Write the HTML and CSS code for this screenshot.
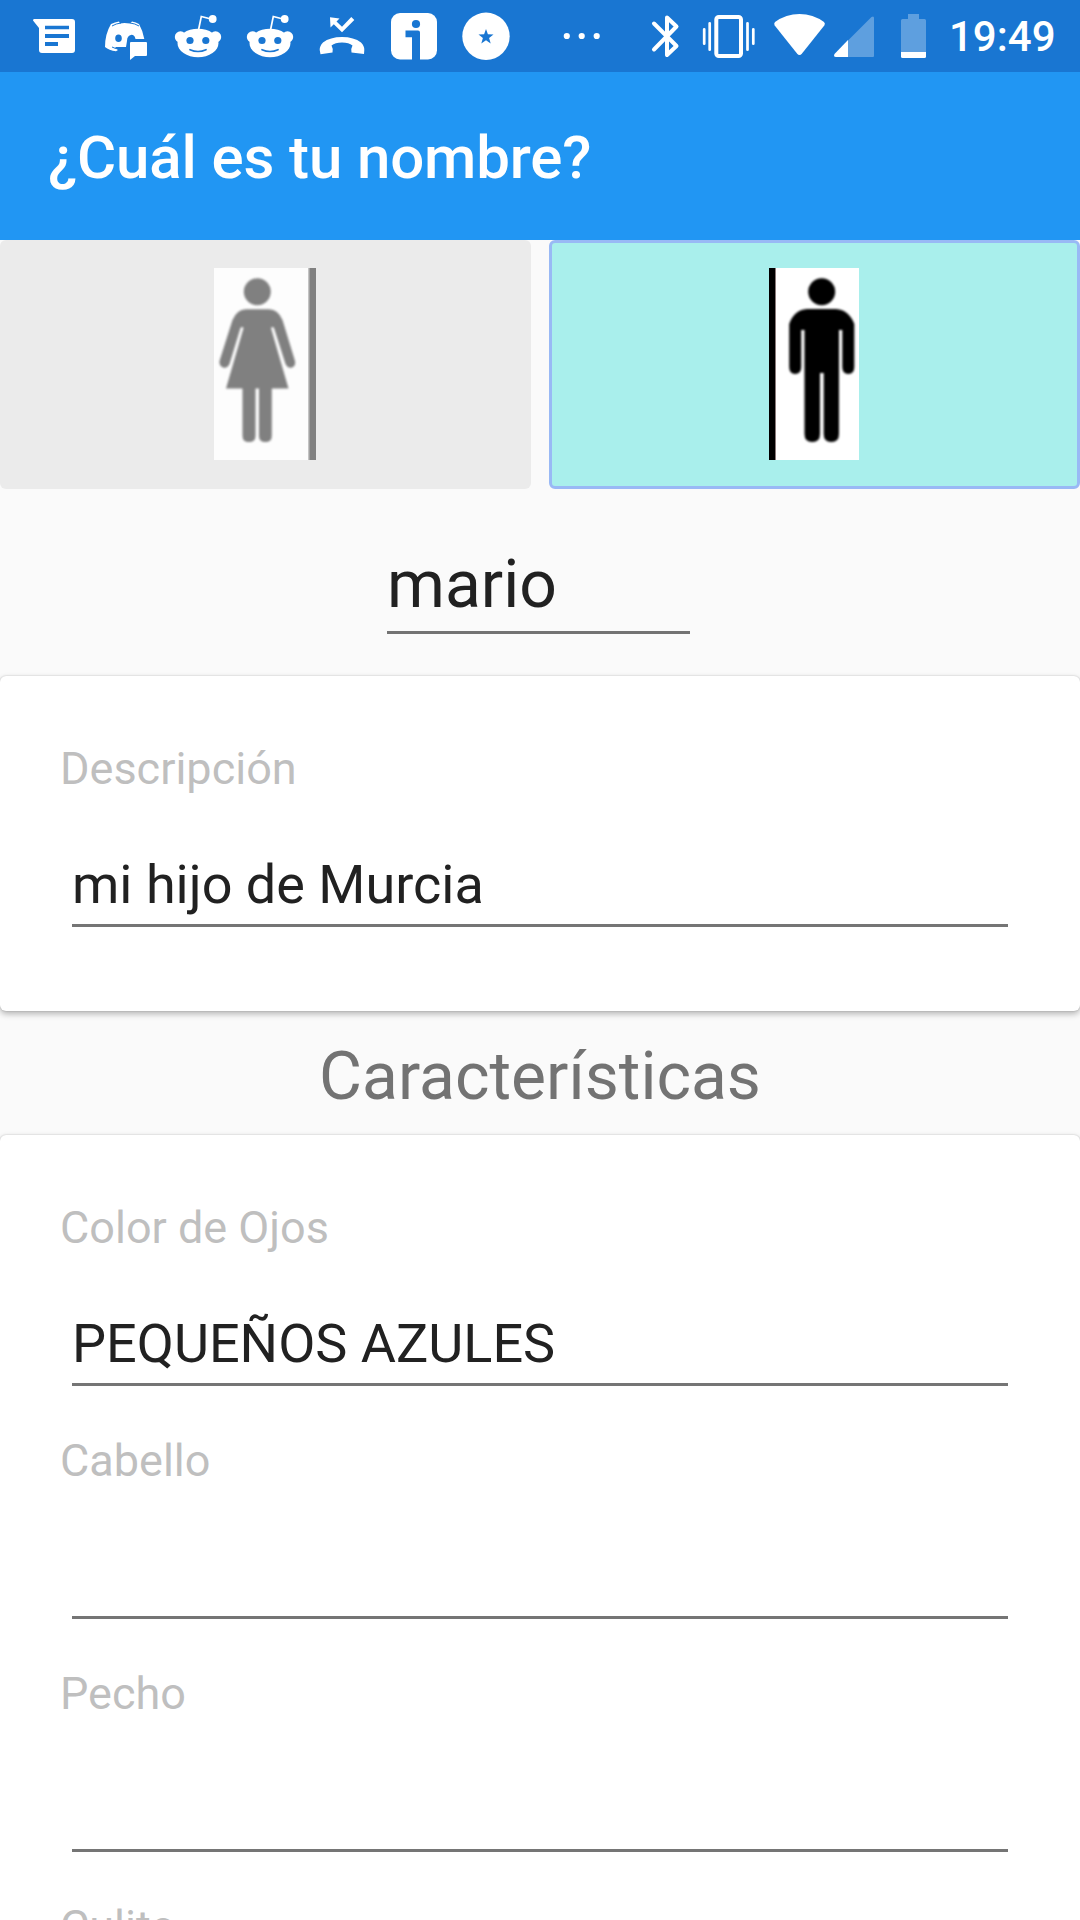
FILE: index.html
```html
<!DOCTYPE html>
<html lang="es">
<head>
    <meta charset="utf-8">
    <meta name="viewport" content="width=device-width, initial-scale=1">
    <title>¿Cuál es tu nombre?</title>
    <link rel="stylesheet" href="styles.css">
</head>
<body>

    <!-- Status bar -->
    <div class="status-bar">
        <svg width="72" height="72" viewBox="18 0 72 72">
            <path fill="#fff" fill-rule="evenodd" d="M34 19H72Q75 19 75 22V50Q75 53 72 53H42Q39 53 39 50V28L33 20.5Q33 19 34 19ZM45 25.7V29.3H69V25.7ZM45 34V38H69V34ZM45 42V46H58V42Z"/>
        </svg>
        <svg width="72" height="72" viewBox="90 0 72 72">
            <path fill="#fff" fill-rule="evenodd" d="M105 47Q105 34 111 24Q115 22 119 21.5L120 23.5Q124 22.5 130 23.5L132 21.5Q136 22 139 24Q143 31 144.3 39H135.5Q134.5 34.8 131.5 34.8Q127 35.5 127 41L126 47H115L118 50L116 51.3Q109 50.5 105 47ZM118.5 34.4A3.3 3.8 0 1 0 118.5 42A3.3 3.8 0 1 0 118.5 34.4Z"/>
            <path fill="none" stroke="#1976d2" stroke-width="1" d="M112 26Q116 23.5 121 23M130 23Q135 23.5 139 26M112 47Q115 48.5 118 49"/>
            <path fill="#fff" d="M131 42H146Q147 42 147 43V55Q147 56 146 56H135L130 60V43Q130 42 131 42Z"/>
        </svg>
        <svg width="72" height="72" viewBox="162 0 72 72">
            <g id="reddit">
                <circle cx="180.5" cy="37" r="5.7" fill="#fff"/>
                <circle cx="215.5" cy="37" r="5.7" fill="#fff"/>
                <ellipse cx="198" cy="43" rx="20.5" ry="14.3" fill="#fff"/>
                <path fill="none" stroke="#fff" stroke-width="1.7" d="M198.5 30L201.3 16.5L211 19"/>
                <circle cx="212.7" cy="19" r="3.9" fill="#fff"/>
                <circle cx="190" cy="40.5" r="3.6" fill="#1976d2"/>
                <circle cx="205.8" cy="40.5" r="3.6" fill="#1976d2"/>
                <path fill="none" stroke="#1976d2" stroke-width="1.7" stroke-linecap="round" d="M190 49.7Q198 53.3 206 49.7"/>
            </g>
        </svg>
        <svg width="72" height="72" viewBox="162 0 72 72"><use href="#reddit"/></svg>
        <svg width="72" height="72" viewBox="306 0 72 72">
            <path fill="#fff" d="M330 17.3L339.5 18.5L336.5 21.5L342 26.8L351.3 17L354.3 20L342 32.3L333.8 24.2L330.5 27.5Z"/>
            <path fill="#fff" d="M319.7 50Q319.5 46 323 42.5Q330 37 342 37Q354 37 361 42.5Q364.5 46 364.3 50L364 54L351.5 52.5Q350.5 49 352.5 45.5Q349 42.5 342 42.5Q335 42.5 331.5 45.5Q333.5 49 332.5 52.5L320.5 54.3Z"/>
        </svg>
        <svg width="72" height="72" viewBox="378 0 72 72">
            <rect x="391" y="13" width="46" height="46.5" rx="9" fill="#fff"/>
            <circle cx="416" cy="24" r="4.1" fill="#1976d2"/>
            <path fill="#1976d2" d="M405.5 30.5H418Q420 30.5 420 32.5V60H412V37.3H405.5Z"/>
        </svg>
        <svg width="72" height="72" viewBox="450 0 72 72">
            <circle cx="486" cy="36.3" r="23.7" fill="#fff"/>
            <path fill="#1976d2" d="M486 29L487.9 34.3L493.5 34.5L489.1 37.9L490.7 43.5L486 40.2L481.3 43.5L482.9 37.9L478.5 34.5L484.1 34.3Z"/>
        </svg>
        <svg width="123" height="72" viewBox="522 0 123 72">
            <g fill="#fff">
                <circle cx="566.8" cy="36" r="3.1"/>
                <circle cx="581.7" cy="36" r="3.1"/>
                <circle cx="596.7" cy="36" r="3.1"/>
            </g>
        </svg>
        <svg width="48" height="72" viewBox="645 0 48 72">
            <path fill="none" stroke="#fff" stroke-width="4" stroke-linecap="round" stroke-linejoin="round" d="M654 23.5L676.5 46L667 55V17.5L676.5 26.5L654 49.5"/>
        </svg>
        <svg width="72" height="72" viewBox="693 0 72 72">
            <rect x="716.3" y="17" width="24.7" height="39" rx="2.5" fill="none" stroke="#fff" stroke-width="4"/>
            <path fill="none" stroke="#fff" stroke-width="2.7" stroke-linecap="round" d="M704.2 29.3V43.7M709.7 23.3V49.7M747.5 23.3V49.7M753.3 29.3V43.7"/>
        </svg>
        <svg width="66" height="72" viewBox="765 0 66 72">
            <path fill="#fff" d="M774.7 25.5Q773.5 23.5 775 22Q786 14 799.5 14Q813 14 824 22Q825.7 23.5 824.3 25.5L802 53.5Q799.5 56.5 797 53.5Z"/>
        </svg>
        <svg width="54" height="72" viewBox="831 0 54 72">
            <path fill="#fff" fill-opacity=".3" d="M848 40.5L871.5 17Q874 15.5 874 18V56Q874 57 873 57H848Z"/>
            <path fill="#fff" d="M848 40L834.5 54Q833 57 836 57H848Z"/>
        </svg>
        <svg width="54" height="72" viewBox="885 0 54 72">
            <path fill="#fff" fill-opacity=".3" d="M908 14H919V19H924.5Q926 19 926 20.5V52H901V20.5Q901 19 902.5 19H908Z"/>
            <path fill="#fff" d="M901 52H926V56.5Q926 58 924.5 58H902.5Q901 58 901 56.5Z"/>
        </svg>
        <span class="clock">19:49</span>
    </div>

    <div class="app-bar">
        <h1>¿Cuál es tu nombre?</h1>
    </div>

    <!-- Gender buttons -->
    <div class="gender">
        <div class="gender-button">
            <svg width="102" height="192" viewBox="0 0 102 192">
                <rect width="102" height="192" fill="#fdfdfd"/>
                <rect x="94" width="2" height="192" fill="#c4c4c4"/>
                <rect x="95.5" width="6.5" height="192" fill="#808080"/>
                <g class="figure" fill="#808080">
                    <circle cx="43.3" cy="23.7" r="13.5"/>
                    <path d="M32 41.3H55Q64 41.5 68.5 52L81 93Q82 98 78 99.5Q73.5 100.5 71.5 96L60 60Q58.5 58 57 60L74.5 120.5H12L29.5 60Q28.5 58 26.5 60L15.5 96Q13.5 100.5 9 99.5Q5 98 5.5 93L18.5 52Q23 41.5 32 41.3Z"/>
                    <path d="M28.5 119H41.5V168Q41.5 174 35 174Q28.5 174 28.5 168ZM45 119H57.8V168Q57.8 174 51.4 174Q45 174 45 168Z"/>
                </g>
            </svg>
        </div>
        <div class="gender-button selected">
            <svg width="90" height="192" viewBox="0 0 90 192">
                <rect width="90" height="192" fill="#fff"/>
                <rect x="5.5" width="1.5" height="192" fill="#8a7a7a"/>
                <rect width="6" height="192" fill="#000"/>
                <g class="figure" fill="#000">
                    <circle cx="52.7" cy="23.7" r="13.5"/>
                    <path d="M38 41H67Q80 42 85.3 56V99Q85.3 106 79.3 106Q73.3 106 73.3 99V62H70V166Q70 174 62.3 174Q54.7 174 54.7 166V105H51V166Q51 174 43.3 174Q35.5 174 35.5 166V62H32.2V99Q32.2 106 26.2 106Q20.2 106 20.2 99V56Q25 42 38 41Z"/>
                </g>
            </svg>
        </div>
    </div>

    <p class="name-field">mario</p>

    <div class="card">
        <label>Descripción</label>
        <p class="field">mi hijo de Murcia</p>
    </div>

    <h2>Características</h2>

    <div class="card">
        <label>Color de Ojos</label>
        <p class="field">PEQUEÑOS AZULES</p>
        <label>Cabello</label>
        <p class="field"></p>
        <label>Pecho</label>
        <p class="field"></p>
        <label>Culito</label>
        <p class="field"></p>
    </div>

</body>
</html>
```
FILE: styles.css
```css
html {
    height: 1920px;
    overflow: hidden;
}
body {
    background-color: #fafafa;
    font-family: Roboto, sans-serif;
    margin: 0;
    height: 1920px;
    overflow: hidden;
}
svg {
    display: block;
    flex: none;
}
.status-bar {
    display: flex;
    align-items: center;
    height: 72px;
    padding-left: 18px;
    background-color: #1976d2;
}
.clock {
    padding: 2px 0 0 10px;
    color: white;
    font-size: 42px;
    font-weight: 500;
    line-height: 70px;
}
.app-bar {
    display: flex;
    align-items: center;
    height: 168px;
    padding-left: 48px;
    background-color: #2196f3;
    color: white;
}
h1 {
    margin: 0;
    padding-top: 4px;
    font-size: 60px;
    font-weight: 500;
    letter-spacing: -0.13px;
    line-height: 72px;
}
.gender {
    display: grid;
    grid-template-columns: 1fr 1fr;
    gap: 18px;
}
.gender-button {
    display: flex;
    align-items: center;
    justify-content: center;
    box-sizing: border-box;
    height: 249px;
    padding: 0 2px 1px 0;
    border-radius: 6px;
    background-color: #ebebeb;
}
.gender-button.selected {
    border: 3px solid #99b9f5;
    background-color: #a9efec;
}
/* Soft edges of the signs */
.figure {
    filter: blur(0.8px);
}
.name-field {
    width: 303px;
    height: 77px;
    margin: 57px 0 42px 387px;
    padding-bottom: 8px;
    border-bottom: 3px solid #737373;
    color: #212121;
    font-size: 66px;
    line-height: 77px;
}
.card {
    padding: 66px 60px 84px;
    border-radius: 6px;
    background-color: white;
    box-shadow: 0 3px 6px rgba(0, 0, 0, 0.28), 0 0 2px rgba(0, 0, 0, 0.2);
}
label {
    display: block;
    color: #bfbfbf;
    font-size: 45px;
    line-height: 53px;
}
.field {
    height: 63px;
    margin: 58px 12px 48px;
    padding-bottom: 8px;
    border-bottom: 3px solid #757575;
    color: #212121;
    font-size: 54px;
    line-height: 63px;
}
.field:last-child {
    margin-bottom: 0;
}
h2 {
    margin: 27px 0 20px;
    color: #737373;
    font-size: 66px;
    font-weight: 400;
    line-height: 77px;
    text-align: center;
}
```
